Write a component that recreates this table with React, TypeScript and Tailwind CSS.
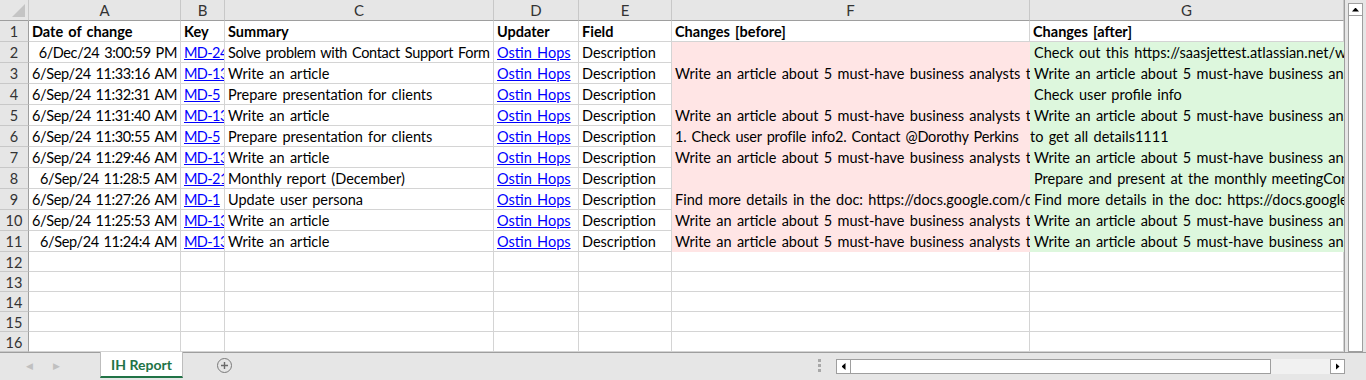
import React from "react";

type Row = {
  date: string;
  key: string;
  summary: string;
  before: string;
  after: string;
  afterTight?: boolean;
  tightSummary?: boolean;
  tightBefore?: boolean;
};

const rows: Row[] = [
  { date: "6/Dec/24 3:00:59 PM", key: "MD-24", summary: "Solve problem with Contact Support Form", before: "", after: "Check out this https://saasjettest.atlassian.net/wiki/spaces", tightSummary: true },
  { date: "6/Sep/24 11:33:16 AM", key: "MD-13", summary: "Write an article", before: "Write an article about 5 must-have business analysts tools", after: "Write an article about 5 must-have business analysts tools" },
  { date: "6/Sep/24 11:32:31 AM", key: "MD-5", summary: "Prepare presentation for clients", before: "", after: "Check user profile info" },
  { date: "6/Sep/24 11:31:40 AM", key: "MD-13", summary: "Write an article", before: "Write an article about 5 must-have business analysts tools", after: "Write an article about 5 must-have business analysts tools" },
  { date: "6/Sep/24 11:30:55 AM", key: "MD-5", summary: "Prepare presentation for clients", before: "1. Check user profile info2. Contact @Dorothy Perkins", after: "to get all details1111", afterTight: true, tightBefore: true },
  { date: "6/Sep/24 11:29:46 AM", key: "MD-13", summary: "Write an article", before: "Write an article about 5 must-have business analysts tools", after: "Write an article about 5 must-have business analysts tools" },
  { date: "6/Sep/24 11:28:5 AM", key: "MD-21", summary: "Monthly report (December)", before: "", after: "Prepare and present at the monthly meetingConsider" },
  { date: "6/Sep/24 11:27:26 AM", key: "MD-1", summary: "Update user persona", before: "Find more details in the doc: https://docs.google.com/document", after: "Find more details in the doc: https://docs.google.com/document" },
  { date: "6/Sep/24 11:25:53 AM", key: "MD-13", summary: "Write an article", before: "Write an article about 5 must-have business analysts tools", after: "Write an article about 5 must-have business analysts tools" },
  { date: "6/Sep/24 11:24:4 AM", key: "MD-13", summary: "Write an article", before: "Write an article about 5 must-have business analysts tools", after: "Write an article about 5 must-have business analysts tools" },
];

const cols = ["A", "B", "C", "D", "E", "F", "G"];
const font = { fontFamily: "Lato, 'Open Sans', sans-serif" };

const txt = "overflow-hidden whitespace-nowrap leading-[22px] text-[14.5px] text-black [word-spacing:1.6px]";
const cell = "h-[21px] border-r border-b border-[#d4d4d4] px-[3px] " + txt;
const emptyCell = "h-[20px] border-r border-b border-[#d4d4d4]";
const rowHeadBase =
  "border-r border-b border-r-[#9e9e9e] border-b-[#c8c8c8] bg-[#e6e6e6] text-center text-[14.5px] text-[#333]";

export default function App() {
  const empty = [12, 13, 14, 15, 16];
  return (
    <div className="w-[1366px] h-[380px] flex flex-col bg-[#e6e6e6] overflow-hidden select-none" style={font}>
      <div className="flex h-[352px]">
        {/* grid */}
        <div className="w-[1345px] h-[352px] overflow-hidden border-r border-[#9e9e9e] bg-white">
          <div className="grid grid-cols-[29px_152px_44px_269px_85px_93px_358px_314px]">
            {/* column headers */}
            <div className="h-[21px] bg-[#e6e6e6] border-r border-b border-r-[#c8c8c8] border-b-[#9e9e9e] relative">
              <div
                className="absolute right-[3px] bottom-[3px] w-[13px] h-[13px] bg-[#c4c4c4]"
                style={{ clipPath: "polygon(100% 0, 100% 100%, 0 100%)" }}
              />
            </div>
            {cols.map((c) => (
              <div
                key={c}
                className="h-[21px] bg-[#e6e6e6] border-r border-b border-r-[#c8c8c8] border-b-[#9e9e9e] text-center leading-[21px] text-[15px] text-[#333]"
              >
                {c}
              </div>
            ))}

            {/* row 1 */}
            <div className={rowHeadBase + " h-[21px] leading-[22px]"}>1</div>
            {["Date of change", "Key", "Summary", "Updater", "Field", "Changes [before]", "Changes [after]"].map((h) => (
              <div key={h} className={cell + " font-bold"}>
                {h}
              </div>
            ))}

            {rows.map((r, i) => (
              <React.Fragment key={i}>
                <div className={rowHeadBase + " h-[21px] leading-[22px]"}>{i + 2}</div>
                <div className={cell + " text-right tracking-[-0.4px]"}>{r.date}</div>
                <div className={cell + " px-[2px] tracking-[-0.6px]"}>
                  <span className="text-[#0000ff] underline">{r.key}</span>
                </div>
                <div className={cell + (r.tightSummary ? " tracking-[-0.35px]" : "")}>{r.summary}</div>
                <div className={cell + " px-[2px]"}>
                  <span className="text-[#0000ff] underline">Ostin Hops</span>
                </div>
                <div className={cell}>Description</div>
                <div className={"h-[21px] px-[3px] bg-[#ffe5e5] " + txt + (r.tightBefore ? " tracking-[-0.2px]" : "")}>
                  {r.before}
                </div>
                <div className={"h-[21px] bg-[#ddf7dd] " + txt + (r.afterTight ? " pl-0" : " pl-[4px]")}>
                  {r.after}
                </div>
              </React.Fragment>
            ))}

            {empty.map((n) => (
              <React.Fragment key={n}>
                <div className={rowHeadBase + " h-[20px] leading-[21px]"}>{n}</div>
                {cols.map((c) => (
                  <div key={c} className={emptyCell}></div>
                ))}
              </React.Fragment>
            ))}
          </div>
        </div>

        {/* vertical scrollbar */}
        <div className="flex-1 relative">
          <div className="absolute left-[3px] top-[3px] w-[15px] h-[13px] bg-white border border-[#9e9e9e] flex items-center justify-center">
            <div
              className="w-[7px] h-[4px] bg-black"
              style={{ clipPath: "polygon(50% 0, 100% 100%, 0 100%)" }}
            />
          </div>
          <div className="absolute left-[3px] top-[16px] w-[15px] bottom-0 bg-white border border-t-0 border-[#9e9e9e]" />
        </div>
      </div>

      {/* bottom bar */}
      <div className="flex-1 flex items-start relative border-t border-[#9e9e9e]">
        <div className="w-[100px] h-[25px] flex items-center text-[#c0c0c0] text-[9px]">
          <span className="ml-[26px]">◀</span>
          <span className="ml-[20px]">▶</span>
        </div>
        <div className="w-[83px] h-[26px] bg-white border-l border-r border-[#bdbdbd] border-b-2 border-b-[#217346] flex items-center justify-center text-[14px] font-bold text-[#217346] -mt-px">
          IH Report
        </div>
        <div className="ml-[34px] mt-[5px] w-[15px] h-[15px] rounded-full border border-[#7a7a7a] flex items-center justify-center">
          <svg width="9" height="9" viewBox="0 0 9 9">
            <path d="M4.5 1v7M1 4.5h7" stroke="#6a6a6a" strokeWidth="1.4" />
          </svg>
        </div>

        <div className="absolute left-[818px] top-[6px] flex flex-col gap-[2px]">
          <div className="w-[3px] h-[3px] bg-[#a8a8a8]" />
          <div className="w-[3px] h-[3px] bg-[#a8a8a8]" />
          <div className="w-[3px] h-[3px] bg-[#a8a8a8]" />
        </div>

        <div className="absolute left-[836px] top-[6px] w-[509px] h-[15px] flex bg-[#f1f1f1]">
          <div className="w-[15px] h-[15px] bg-white border border-[#9e9e9e] flex items-center justify-center">
            <div className="w-[4px] h-[7px] bg-black" style={{ clipPath: "polygon(0 50%, 100% 0, 100% 100%)" }} />
          </div>
          <div className="w-[420px] h-[15px] bg-white border border-l-0 border-[#9e9e9e]" />
          <div className="flex-1" />
          <div className="w-[15px] h-[15px] bg-white border border-[#9e9e9e] flex items-center justify-center">
            <div className="w-[4px] h-[7px] bg-black" style={{ clipPath: "polygon(0 0, 100% 50%, 0 100%)" }} />
          </div>
        </div>
      </div>
    </div>
  );
}
